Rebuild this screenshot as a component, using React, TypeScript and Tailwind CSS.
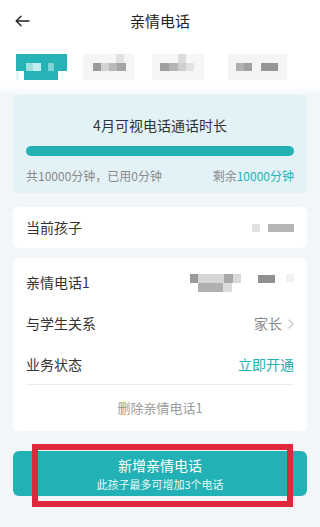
import React from "react";

function Px({ c, w, h, className = "" }: { c: string; w: string; h: string; className?: string }) {
  return <div className={`${w} ${h} ${c} ${className}`} />;
}

export default function App() {
  return (
    <div className="w-[320px] h-[527px] overflow-hidden bg-[#f3f6f9] font-['Noto_Sans_CJK_SC','Noto_Sans',sans-serif] text-[#333]">
      {/* header */}
      <div className="bg-white">
        <div className="grid grid-cols-[44px_1fr_44px] h-[42px] items-center">
          <div className="pl-[15px] flex items-center">
            <svg width="15" height="12" viewBox="0 0 15 12" fill="none" stroke="#222" strokeWidth="1.4" strokeLinecap="round" strokeLinejoin="round">
              <path d="M14 6H1.5" />
              <path d="M6 1.2L1.2 6L6 10.8" />
            </svg>
          </div>
          <div className="text-center text-[15px] text-[#222]">亲情电话</div>
          <div />
        </div>
        {/* tabs (mosaic) */}
        <div className="h-[44px] flex items-start pt-[12px] pl-[16px] gap-[16px]">
          <div className="w-[51px] h-[26px] flex flex-col">
            <div className="h-[9px] bg-[#25b3b6]" />
            <div className="h-[8px] flex">
              <div className="w-[10px] bg-[#25b3b6]" />
              <div className="w-[7px] bg-[#9edfe0]" />
              <div className="w-[8px] bg-[#c7eeee]" />
              <div className="w-[7px] bg-[#25b3b6]" />
              <div className="w-[6px] bg-[#7ed3d4]" />
              <div className="flex-1 bg-[#25b3b6]" />
            </div>
            <div className="h-[9px] flex">
              <div className="w-[3px] bg-[#e3f5f5]" />
              <div className="w-[5px] bg-white" />
              <div className="w-[34px] bg-[#25b3b6]" />
            </div>
          </div>
          <div className="w-[51px] h-[26px] bg-[#f5f5f5] flex flex-col">
            <div className="h-[9px] flex justify-end pr-[10px]"><Px c="bg-[#e0e0e0]" w="w-[8px]" h="h-[9px]" /></div>
            <div className="h-[8px] flex pl-[10px]">
              <Px c="bg-[#9a9a9a]" w="w-[8px]" h="h-[8px]" />
              <Px c="bg-[#d2d2d2]" w="w-[8px]" h="h-[8px]" />
              <Px c="bg-[#b8b8b8]" w="w-[8px]" h="h-[8px]" />
              <Px c="bg-[#a5a5a5]" w="w-[9px]" h="h-[8px]" />
            </div>
          </div>
          <div className="w-[52px] h-[26px] bg-[#f6f6f6] flex flex-col ml-[2px]">
            <div className="h-[9px] flex pl-[26px]"><Px c="bg-[#dcdcdc]" w="w-[8px]" h="h-[9px]" /></div>
            <div className="h-[8px] flex pl-[8px]">
              <Px c="bg-[#9e9e9e]" w="w-[9px]" h="h-[8px]" />
              <Px c="bg-[#b5b5b5]" w="w-[9px]" h="h-[8px]" />
              <Px c="bg-[#cfcfcf]" w="w-[8px]" h="h-[8px]" />
              <Px c="bg-[#e2e2e2]" w="w-[8px]" h="h-[8px]" />
            </div>
          </div>
          <div className="w-[59px] h-[26px] bg-[#f4f4f4] flex flex-col ml-[8px]">
            <div className="h-[9px]" />
            <div className="h-[8px] flex pl-[8px]">
              <Px c="bg-[#b0b0b0]" w="w-[8px]" h="h-[8px]" />
              <Px c="bg-[#a0a0a0]" w="w-[8px]" h="h-[8px]" />
              <Px c="bg-[#f4f4f4]" w="w-[9px]" h="h-[8px]" />
              <Px c="bg-[#979797]" w="w-[17px]" h="h-[8px]" />
            </div>
          </div>
        </div>
      </div>
      <div className="h-[9px] bg-gradient-to-b from-white to-[#f3f6f9]" />

      <div className="px-[13px]">
        {/* usage card */}
        <div className="h-[98px] rounded-[6px] bg-[#e2f2f7] px-[13px] flex flex-col">
          <div className="mt-[20px] text-center text-[14px] leading-[20px] text-[#333]">4月可视电话通话时长</div>
          <div className="mt-[11px] h-[10px] rounded-full bg-[#23b1b4]" />
          <div className="mt-[11px] flex justify-between text-[12px] leading-[17px] text-[#8a8a8a]">
            <span>共10000分钟，已用0分钟</span>
            <span>
              剩余<span className="text-[#2ab3b4]">10000分钟</span>
            </span>
          </div>
        </div>

        {/* current child */}
        <div className="mt-[14px] h-[41px] rounded-[6px] bg-white px-[13px] flex items-center justify-between">
          <span className="text-[14px]">当前孩子</span>
          <div className="flex items-center gap-[8px] pr-[0px]">
            <div className="w-[8px] h-[8px] bg-[#e2e2e2]" />
            <div className="w-[26px] h-[8px] bg-[#b5b5b5]" />
          </div>
        </div>

        {/* phone card */}
        <div className="mt-[10px] rounded-[6px] bg-white px-[13px] pt-[4px]">
          <div className="h-[41px] flex items-center justify-between">
            <span className="text-[14px]">亲情电话1</span>
            <div className="flex items-start gap-[17px]">
              <div className="flex flex-col">
                <div className="flex h-[9px]">
                  <div className="w-[8px] bg-[#9a9a9a]" />
                  <div className="w-[26px] bg-[#d6d6d6]" />
                  <div className="w-[9px] bg-[#a9a9a9]" />
                  <div className="w-[8px] bg-[#d9d9d9]" />
                </div>
                <div className="flex h-[9px] pl-[8px]">
                  <div className="w-[25px] bg-[#b0b0b0]" />
                  <div className="w-[9px] bg-[#dcdcdc]" />
                </div>
              </div>
              <div className="w-[17px] h-[8px] bg-[#8f8f8f] mt-[1px]" />
              <div className="w-[8px] h-[8px] bg-[#f1f1f1] -ml-[6px]" />
            </div>
          </div>
          <div className="h-[41px] flex items-center justify-between">
            <span className="text-[14px]">与学生关系</span>
            <div className="flex items-center gap-[6px]">
              <span className="text-[14px] text-[#888]">家长</span>
              <svg width="6" height="10" viewBox="0 0 6 10" fill="none" stroke="#c4c4c4" strokeWidth="1.2" strokeLinecap="round" strokeLinejoin="round">
                <path d="M1 1l4 4-4 4" />
              </svg>
            </div>
          </div>
          <div className="h-[41px] flex items-center justify-between border-b border-[#ececec]">
            <span className="text-[14px]">业务状态</span>
            <span className="text-[14px] text-[#22aeb1]">立即开通</span>
          </div>
          <div className="h-[46px] flex items-center justify-center text-[13px] text-[#9a9a9a]">删除亲情电话1</div>
        </div>

        {/* add button */}
        <div className="relative mt-[20px]">
          <div className="h-[45px] rounded-[6px] bg-[#22b1b4] flex flex-col items-center justify-center text-white">
            <span className="text-[14px] leading-[19px]">新增亲情电话</span>
            <span className="text-[11px] leading-[15px] mt-[2px] text-[#e8f8f8]">此孩子最多可增加3个电话</span>
          </div>
          <div className="absolute left-[19px] top-[-7px] w-[261px] h-[63px] border-[6px] border-[#e0283d]" />
        </div>
      </div>
    </div>
  );
}
